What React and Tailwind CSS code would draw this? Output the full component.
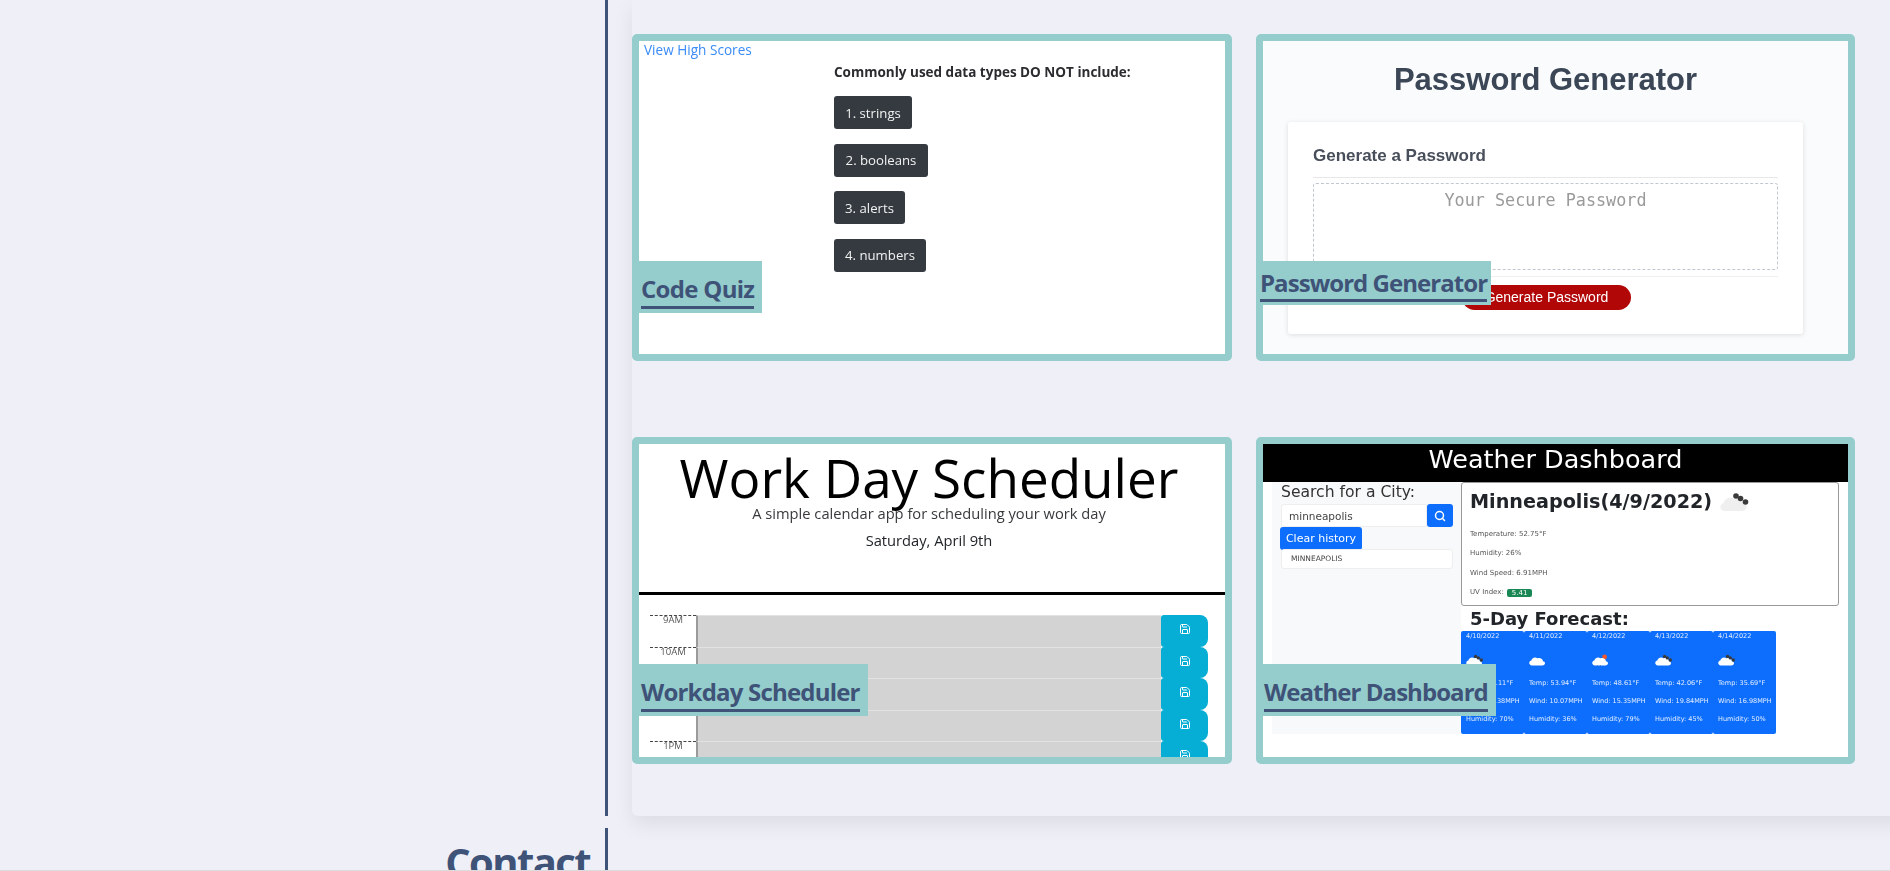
import { Save, Search } from "lucide-react"

const labelFont = "font-['Open_Sans',sans-serif] font-bold"
const weatherFont = "font-['DejaVu_Sans',sans-serif]"

const quizChoices = [
  ["1. strings", "w-[78px]"],
  ["2. booleans", "w-[94px]"],
  ["3. alerts", "w-[71px]"],
  ["4. numbers", "w-[92px]"],
]

const hours = ["9AM", "10AM", "", "", "1PM"]

const forecast = [
  { date: "4/10/2022", temp: "51.11", wind: "15.38", humidity: 70, kind: "dark" },
  { date: "4/11/2022", temp: "53.94", wind: "10.07", humidity: 36, kind: "plain" },
  { date: "4/12/2022", temp: "48.61", wind: "15.35", humidity: 79, kind: "rain" },
  { date: "4/13/2022", temp: "42.06", wind: "19.84", humidity: 45, kind: "dark" },
  { date: "4/14/2022", temp: "35.69", wind: "16.98", humidity: 50, kind: "dark" },
]

function CloudIcon({ kind, className, fill = "#ffffff" }) {
  return (
    <svg viewBox="0 0 30 18" className={className}>
      {kind === "rain" && <circle cx="21" cy="4" r="4" fill="#f0552b" />}
      <path
        d="M5 18 C-1 18 -1 11 4 10 C4 6 10 3 14 6 C19 4 24 8 23 11 C28 11 28 18 22 18 Z"
        fill={fill}
      />
      {kind === "dark" && (
        <g fill="#3a3a3a">
          <circle cx="16" cy="3" r="2.8" />
          <circle cx="20.5" cy="5.5" r="2.8" />
          <circle cx="25.5" cy="9" r="2.8" />
        </g>
      )}
      {kind === "rain" && <path d="M9 18 L8 20 M14 18 L13 20" stroke="#3a5a8a" strokeWidth="1.5" />}
    </svg>
  )
}

function CodeQuizPreview() {
  return (
    <div className="h-full bg-white font-['Open_Sans',sans-serif] blur-[0.3px]">
      <div className="pl-[5px] text-[13.6px] leading-[18px] text-[#3b8cf6]">View High Scores</div>
      <div className="pl-[195px] pt-[4px]">
        <p className="text-[13.5px] leading-[18px] font-bold whitespace-nowrap text-[#2b2b30]">
          Commonly used data types DO NOT include:
        </p>
        <div className="mt-[15px] flex flex-col gap-[14.5px]">
          {quizChoices.map(([text, width]) => (
            <div
              key={text}
              className={`${width} flex h-[33px] items-center justify-center rounded-[3px] bg-[#343a40] pt-[2px] text-[13.2px] text-[#f2f2f2]`}
            >
              {text}
            </div>
          ))}
        </div>
      </div>
    </div>
  )
}

function PasswordPreview() {
  return (
    <div className="h-full bg-[#fafbfd] pt-[21px] font-['Liberation_Sans',sans-serif] blur-[0.3px]">
      <h3 className="text-center text-[31px] leading-[36px] font-bold text-[#3b4656]">
        <span className="mr-[20px]">Password Generator</span>
      </h3>
      <div className="mt-[24px] ml-[25px] h-[212px] w-[515px] rounded-[3px] bg-white px-[25px] pt-[24px] shadow-[0_1px_5px_rgba(0,0,0,0.12)]">
        <div className="text-[17px] leading-[20px] font-bold text-[#484f5b]">Generate a Password</div>
        <div className="mt-[11px] border-t border-[#e8e8e8]" />
        <div className="mt-[5px] h-[87px] rounded-[3px] border border-dashed border-[#c0c7d0] pt-[6px] text-center font-['DejaVu_Sans_Mono',monospace] text-[16.8px] leading-[20px] text-[#9a9a9a]">
          Your Secure Password
        </div>
        <div className="mt-[6px] border-t border-[#efefef]" />
        <div className="mt-[8px] ml-[149px] flex h-[25px] w-[169px] items-center justify-center rounded-full bg-[#b20707] text-[14px] text-white">
          Generate Password
        </div>
      </div>
    </div>
  )
}

function SchedulerPreview() {
  return (
    <div className="h-full overflow-hidden bg-white font-['Open_Sans',sans-serif] blur-[0.2px]">
      <div className="h-[151px] border-b-[3px] border-black pt-[9px] pr-[6px] text-center">
        <h3 className="text-[53px] leading-[50px] text-black">Work Day Scheduler</h3>
        <p className="text-[14.7px] leading-[20px] text-[#373a3c]">
          A simple calendar app for scheduling your work day
        </p>
        <p className="mt-[7px] text-[14.7px] leading-[20px] text-[#212529]">Saturday, April 9th</p>
      </div>
      <div className="mt-[20px] pr-[17px] pl-[11px]">
        {hours.map((hour, i) => (
          <div key={i} className="flex h-[31.5px]">
            <div className="w-[46px] border-t border-dashed border-[#444] text-center text-[9.5px] leading-[8px] text-[#555]">
              {hour}
            </div>
            <div className="flex-1 border-t border-l-2 border-t-[#e2e2e2] border-l-[#9a9a9a] bg-[#d3d3d3]" />
            <div className="flex w-[47px] items-center justify-center rounded-l-[3px] rounded-r-[8px] bg-[#06aed5] pb-[3px] text-white">
              <Save size={12} strokeWidth={2} />
            </div>
          </div>
        ))}
      </div>
    </div>
  )
}

function WeatherPreview() {
  return (
    <div className={`h-full bg-white ${weatherFont} blur-[0.25px]`}>
      <div className="h-[38px] bg-black text-center text-[25.5px] leading-[30px] text-white">Weather Dashboard</div>
      <div className="flex">
        <div className="ml-[9px] h-[252px] w-[189px] bg-[#f8f9fa] pt-[1px] pl-[9px]">
          <div className="text-[15.6px] leading-[18px] text-[#333]">Search for a City:</div>
          <div className="mt-[3px] flex h-[23px] w-[172px]">
            <div className="flex-1 rounded-l-[3px] border border-[#eeeeee] bg-white pt-[1px] pl-[7px] text-[10.5px] leading-[21px] text-[#444]">
              minneapolis
            </div>
            <div className="flex w-[26px] items-center justify-center rounded-[3px] bg-[#0d6efd] text-white">
              <Search size={12} strokeWidth={3} />
            </div>
          </div>
          <div className="ml-[-1px] flex h-[23px] w-[82px] items-center justify-center rounded-[3px] bg-[#0d6efd] pt-[1px] text-[11px] text-white">
            Clear history
          </div>
          <div className="mt-[-1px] h-[20px] w-[172px] rounded-[3px] border border-[#eeeeee] bg-white pl-[9px] text-[7.5px] leading-[18px] text-[#444]">
            MINNEAPOLIS
          </div>
        </div>
        <div className="w-[378px]">
          <div className="h-[124px] rounded-[3px] border border-[#999] bg-white pl-[8px]">
            <div className="flex h-[38px] items-center">
              <span className="text-[19.2px] font-bold text-[#212529]">Minneapolis(4/9/2022)</span>
              <CloudIcon kind="dark" fill="#efefef" className="ml-[8px] h-[18px] w-[30px]" />
            </div>
            <div className="mt-[8px] flex flex-col gap-[8px] text-[7px] leading-[11.3px] text-[#555]">
              <div>Temperature: 52.75°F</div>
              <div>Humidity: 26%</div>
              <div>Wind Speed: 6.91MPH</div>
              <div className="flex items-center gap-[3px]">
                UV Index:
                <span className="rounded-[2px] bg-[#198754] px-[5px] leading-[8px] text-white">5.41</span>
              </div>
            </div>
          </div>
          <div className="pl-[9px] text-[18px] leading-[25px] font-bold text-[#212529]">5-Day Forecast:</div>
          <div className="flex w-[315px]">
            {forecast.map((day) => (
              <div key={day.date} className="h-[103px] w-[63px] rounded-[2px] bg-[#0d6efd] pt-[1px] pl-[5px] text-[6.5px] leading-[8px] whitespace-nowrap text-[#e4eeff]">
                <div>{day.date}</div>
                <CloudIcon kind={day.kind} className="mt-[14px] h-[12px] w-[18px]" />
                <div className="mt-[13px]">Temp: {day.temp}°F</div>
                <div className="mt-[10px]">Wind: {day.wind}MPH</div>
                <div className="mt-[10px]">Humidity: {day.humidity}%</div>
              </div>
            ))}
          </div>
        </div>
      </div>
    </div>
  )
}

function ProjectCard({ title, labelClass, textClass, children }) {
  return (
    <div className="relative h-[327px] w-full rounded-[5px] border-[7px] border-[#95cdcd]">
      <div className="h-full overflow-hidden">{children}</div>
      {/* Title tab over the screenshot */}
      <div className={`absolute bg-[#95cdcd] ${labelClass}`}>
        <span className={`block border-b-[3px] border-[#3e5377] text-[24px] leading-[30px] whitespace-nowrap text-[#3e5377] ${labelFont} ${textClass}`}>
          {title}
        </span>
      </div>
    </div>
  )
}

export default function App() {
  return (
    <div className="flex h-[871px] overflow-hidden border-b border-[#dcdcdc] bg-[#eeeff7]">
      <div className="w-[608px] shrink-0">
        <div className="h-[816px] border-r-[3px] border-[#3e5377]" />
        <div className="mt-[12px] h-[60px] border-r-[3px] border-[#3e5377] pt-[10px] pr-[15px] text-right">
          <h2 className={`text-[40px] leading-[48px] tracking-[-1.6px] text-[#3e5377] ${labelFont}`}>Contact</h2>
        </div>
      </div>

      <div className="ml-[24px] h-[816px] w-[1400px] shrink-0 rounded-b-[6px] pt-[34px] shadow-[0_8px_20px_rgba(0,0,0,0.08)]">
        <div className="grid w-[1223px] grid-cols-[600px_599px] gap-x-[24px] gap-y-[76px]">
          <ProjectCard title="Code Quiz" labelClass="bottom-[41px] left-0 h-[52px] pt-[13px] pr-[8px] pl-[2px]" textClass="pb-[2px] tracking-[-0.7px]">
            <CodeQuizPreview />
          </ProjectCard>
          <ProjectCard title="Password Generator" labelClass="top-[220px] left-[-7px] h-[44px] pt-[7px] pr-[4px] pl-[4px]" textClass="pb-[1px] tracking-[-0.95px]">
            <PasswordPreview />
          </ProjectCard>
          <ProjectCard title="Workday Scheduler" labelClass="bottom-[41px] left-0 h-[52px] pt-[13px] pr-[8px] pl-[2px]" textClass="pb-[2px] tracking-[-0.8px]">
            <SchedulerPreview />
          </ProjectCard>
          <ProjectCard title="Weather Dashboard" labelClass="bottom-[41px] left-0 h-[52px] pt-[13px] pr-[8px] pl-[1px]" textClass="pb-[2px] tracking-[-0.95px]">
            <WeatherPreview />
          </ProjectCard>
        </div>
      </div>
    </div>
  )
}
